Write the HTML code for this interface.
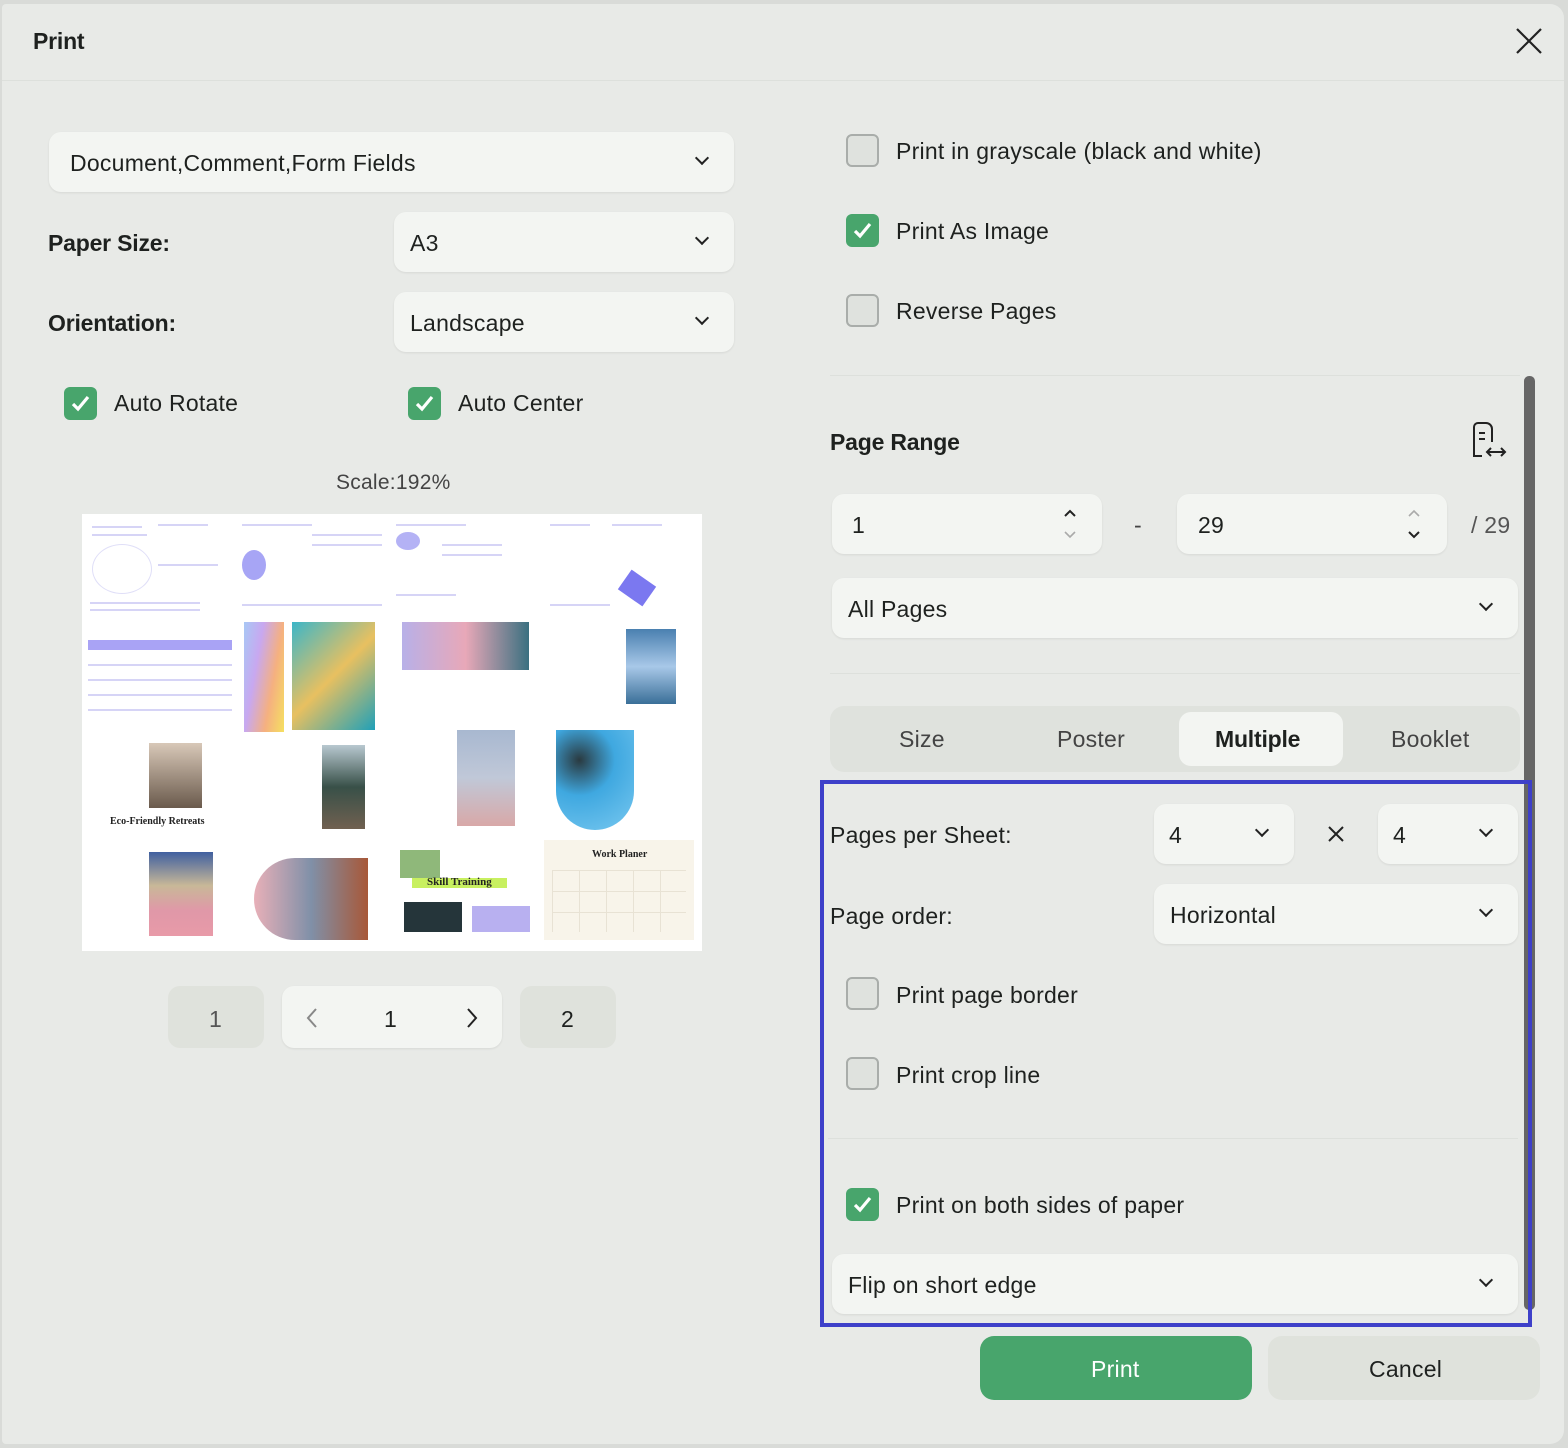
<!DOCTYPE html>
<html><head><meta charset="utf-8">
<style>
*{box-sizing:border-box;margin:0;padding:0}
body{width:1568px;height:1448px;background:#d9dbd8;font-family:"Liberation Sans",sans-serif;color:#1e211f;position:relative;overflow:hidden}
.dlg{position:absolute;left:2px;top:4px;width:1562px;height:1440px;background:#e8eae7;border-radius:4px 14px 14px 4px}
.a{position:absolute}
.t{position:absolute;font-size:23px;letter-spacing:0.25px;white-space:nowrap;line-height:1}
.b{font-weight:bold;letter-spacing:-0.2px}
.box{position:absolute;background:#f3f5f2;border-radius:12px;box-shadow:0 1px 2px rgba(0,0,0,.08)}
.chev{position:absolute;width:10px;height:10px;border-right:2px solid #222;border-bottom:2px solid #222;transform:rotate(45deg)}
.cb{position:absolute;width:33px;height:33px;border-radius:6px;background:#dfe2de;border:2px solid #a9adaa}
.cb.on{background:#48a56c;border:none}
.cb.on svg{position:absolute;left:6px;top:6px}
.hr{position:absolute;height:1px;background:#dde0dc}
.pt{position:absolute;font-family:"Liberation Serif",serif;font-weight:bold;white-space:nowrap;line-height:1;color:#222}
.ln{position:absolute;height:2px;background:#d6d4f6}
</style></head><body>
<div class="dlg"></div>
<div class="t b" style="left:33px;top:30px;font-size:23px">Print</div>
<svg class="a" style="left:1515px;top:27px" width="28" height="28" viewBox="0 0 28 28"><path d="M2 2L26 26M26 2L2 26" stroke="#222" stroke-width="2.2"/></svg>
<div class="hr" style="left:2px;top:80px;width:1562px"></div>

<!-- left -->
<div class="box" style="left:49px;top:132px;width:685px;height:60px"></div>
<div class="t" style="left:70px;top:152px">Document,Comment,Form Fields</div>
<div class="chev" style="left:697px;top:153px"></div>

<div class="t b" style="left:48px;top:232px">Paper Size:</div>
<div class="box" style="left:394px;top:212px;width:340px;height:60px"></div>
<div class="t" style="left:410px;top:232px">A3</div>
<div class="chev" style="left:697px;top:233px"></div>

<div class="t b" style="left:48px;top:312px">Orientation:</div>
<div class="box" style="left:394px;top:292px;width:340px;height:60px"></div>
<div class="t" style="left:410px;top:312px">Landscape</div>
<div class="chev" style="left:697px;top:313px"></div>

<div class="cb on" style="left:64px;top:387px"><svg width="21" height="21" viewBox="0 0 21 21"><path d="M3 11l5 5 10-12" stroke="#fff" stroke-width="3.2" fill="none"/></svg></div>
<div class="t" style="left:114px;top:392px">Auto Rotate</div>
<div class="cb on" style="left:408px;top:387px"><svg width="21" height="21" viewBox="0 0 21 21"><path d="M3 11l5 5 10-12" stroke="#fff" stroke-width="3.2" fill="none"/></svg></div>
<div class="t" style="left:458px;top:392px">Auto Center</div>

<div class="t" style="left:336px;top:472px;font-size:21px;color:#444">Scale:192%</div>

<!-- preview -->
<div class="a" style="left:82px;top:514px;width:620px;height:437px;background:#fff">
 <div class="ln" style="left:10px;top:12px;width:50px"></div><div class="ln" style="left:10px;top:20px;width:55px"></div>
 <div class="a" style="left:10px;top:30px;width:60px;height:50px;border-radius:50%;border:1px solid #e0dff8"></div>
 <div class="ln" style="left:76px;top:10px;width:50px"></div><div class="ln" style="left:76px;top:50px;width:60px"></div>
 <div class="ln" style="left:8px;top:88px;width:110px"></div><div class="ln" style="left:8px;top:95px;width:110px"></div>
 <div class="ln" style="left:160px;top:10px;width:70px"></div><div class="ln" style="left:230px;top:20px;width:70px"></div><div class="ln" style="left:230px;top:30px;width:70px"></div><div class="ln" style="left:160px;top:90px;width:140px"></div>
 <div class="ln" style="left:314px;top:10px;width:70px"></div><div class="ln" style="left:360px;top:30px;width:60px"></div><div class="ln" style="left:360px;top:40px;width:60px"></div><div class="ln" style="left:314px;top:80px;width:60px"></div>
 <div class="ln" style="left:468px;top:10px;width:40px"></div><div class="ln" style="left:530px;top:10px;width:50px"></div><div class="ln" style="left:468px;top:90px;width:60px"></div>
 <div class="a" style="left:314px;top:18px;width:24px;height:18px;border-radius:50%;background:#b4b2f5"></div>
 <div class="a" style="left:540px;top:62px;width:30px;height:24px;background:#7b78f0;transform:rotate(35deg)"></div>
 <div class="a" style="left:160px;top:36px;width:24px;height:30px;border-radius:50%;background:#a7a5f5"></div>
 <div class="a" style="left:6px;top:126px;width:144px;height:10px;background:#a9a3f5"></div>
 <div class="ln" style="left:6px;top:150px;width:144px"></div><div class="ln" style="left:6px;top:165px;width:144px"></div><div class="ln" style="left:6px;top:180px;width:144px"></div><div class="ln" style="left:6px;top:195px;width:144px"></div>
 <div class="a" style="left:162px;top:108px;width:40px;height:110px;background:linear-gradient(100deg,#a8c8f5,#c8a8f0,#f5b080,#f5e060)"></div>
 <div class="a" style="left:210px;top:108px;width:83px;height:108px;background:linear-gradient(135deg,#3cb6c8,#e8c060,#20a0b8)"></div>
 <div class="a" style="left:320px;top:108px;width:127px;height:48px;background:linear-gradient(90deg,#b8b0e8,#e8a8b8,#3a7080)"></div>
 <div class="a" style="left:544px;top:115px;width:50px;height:75px;background:linear-gradient(#4a80b0,#a8c8e8,#3a6f98)"></div>
 <div class="a" style="left:67px;top:229px;width:53px;height:65px;background:linear-gradient(#d8c8b8,#6a5a4c)"></div>
 <div class="pt" style="left:28px;top:303px;font-size:10px">Eco-Friendly Retreats</div>
 <div class="a" style="left:240px;top:231px;width:43px;height:84px;background:linear-gradient(#b8c8d0,#385048,#706050)"></div>
 <div class="a" style="left:375px;top:216px;width:58px;height:96px;background:linear-gradient(#a8b8d0,#c0c8d8,#d8a8a8)"></div>
 <div class="a" style="left:474px;top:216px;width:78px;height:100px;border-radius:0 0 40px 40px;background:radial-gradient(circle at 30% 30%,#2a3a40,#3fa8e0 40%,#78c8f0)"></div>
 <div class="a" style="left:67px;top:338px;width:64px;height:84px;background:linear-gradient(#4060a0,#c8b898 40%,#e098a8 70%,#e89aa8)"></div>
 <div class="a" style="left:172px;top:344px;width:114px;height:82px;border-radius:45px 0 0 45px;background:linear-gradient(90deg,#e8b0b8,#8090a8,#a85838)"></div>
 <div class="a" style="left:318px;top:336px;width:40px;height:28px;background:#8fb87a"></div>
 <div class="a" style="left:330px;top:364px;width:95px;height:10px;background:#c8f060"></div>
 <div class="pt" style="left:345px;top:363px;font-size:11px">Skill Training</div>
 <div class="a" style="left:322px;top:388px;width:58px;height:30px;background:#25353a"></div>
 <div class="a" style="left:390px;top:392px;width:58px;height:26px;background:#b8b0f0"></div>
 <div class="a" style="left:462px;top:326px;width:150px;height:100px;background:#f8f4ea"></div>
 <div class="pt" style="left:510px;top:336px;font-size:10px">Work Planer</div>
 <div class="a" style="left:470px;top:356px;width:134px;height:62px;background:repeating-linear-gradient(90deg,#e8e2d4 0 1px,transparent 1px 27px),repeating-linear-gradient(#e8e2d4 0 1px,transparent 1px 21px)"></div>
</div>

<!-- pager -->
<div class="a" style="left:168px;top:986px;width:96px;height:62px;background:#dfe2dc;border-radius:12px"></div>
<div class="t" style="left:209px;top:1008px;color:#555">1</div>
<div class="box" style="left:282px;top:986px;width:220px;height:62px"></div>
<svg class="a" style="left:304px;top:1007px" width="16" height="22"><path d="M12 2L4 11l8 9" stroke="#888" stroke-width="2" fill="none"/></svg>
<div class="t" style="left:384px;top:1008px">1</div>
<svg class="a" style="left:464px;top:1007px" width="16" height="22"><path d="M4 2l8 9-8 9" stroke="#222" stroke-width="2" fill="none"/></svg>
<div class="a" style="left:520px;top:986px;width:96px;height:62px;background:#dfe2dc;border-radius:12px"></div>
<div class="t" style="left:561px;top:1008px">2</div>

<!-- right -->
<div class="cb" style="left:846px;top:134px"></div>
<div class="t" style="left:896px;top:140px">Print in grayscale (black and white)</div>
<div class="cb on" style="left:846px;top:214px"><svg width="21" height="21" viewBox="0 0 21 21"><path d="M3 11l5 5 10-12" stroke="#fff" stroke-width="3.2" fill="none"/></svg></div>
<div class="t" style="left:896px;top:220px">Print As Image</div>
<div class="cb" style="left:846px;top:294px"></div>
<div class="t" style="left:896px;top:300px">Reverse Pages</div>

<div class="hr" style="left:830px;top:375px;width:690px"></div>
<div class="a" style="left:1524px;top:376px;width:11px;height:934px;background:#666;border-radius:5px"></div>

<div class="t b" style="left:830px;top:431px">Page Range</div>
<svg class="a" style="left:1470px;top:420px" width="40" height="40" viewBox="0 0 40 40" fill="none" stroke="#222" stroke-width="2"><path d="M12 36H4V7a4 4 0 0 1 4-4h8a6 6 0 0 1 6 6v13"/><path d="M9 13h6M9 19h6"/><path d="M17 32h18M21 28l-4 4 4 4M31 28l4 4-4 4"/></svg>

<div class="box" style="left:832px;top:494px;width:270px;height:60px"></div>
<div class="t" style="left:852px;top:514px">1</div>
<svg class="a" style="left:1062px;top:506px" width="16" height="36"><path d="M3 10l5-5 5 5" stroke="#222" stroke-width="2" fill="none"/><path d="M3 26l5 5 5-5" stroke="#aaa" stroke-width="1.6" fill="none"/></svg>
<div class="t" style="left:1134px;top:514px;color:#444">-</div>
<div class="box" style="left:1177px;top:494px;width:270px;height:60px"></div>
<div class="t" style="left:1198px;top:514px">29</div>
<svg class="a" style="left:1406px;top:506px" width="16" height="36"><path d="M3 10l5-5 5 5" stroke="#aaa" stroke-width="1.6" fill="none"/><path d="M3 26l5 5 5-5" stroke="#222" stroke-width="2" fill="none"/></svg>
<div class="t" style="left:1471px;top:514px;color:#555">/ 29</div>

<div class="box" style="left:832px;top:578px;width:686px;height:60px"></div>
<div class="t" style="left:848px;top:598px">All Pages</div>
<div class="chev" style="left:1481px;top:599px"></div>

<div class="hr" style="left:830px;top:673px;width:690px"></div>

<div class="a" style="left:830px;top:706px;width:690px;height:66px;background:#dfe2dd;border-radius:14px"></div>
<div class="a" style="left:1179px;top:712px;width:164px;height:54px;background:#f3f5f2;border-radius:12px"></div>
<div class="t" style="left:899px;top:728px;color:#444">Size</div>
<div class="t" style="left:1057px;top:728px;color:#444">Poster</div>
<div class="t b" style="left:1215px;top:728px">Multiple</div>
<div class="t" style="left:1391px;top:728px;color:#444">Booklet</div>

<div class="a" style="left:820px;top:780px;width:712px;height:547px;border:4px solid #3e40c9"></div>

<div class="t" style="left:830px;top:824px">Pages per Sheet:</div>
<div class="box" style="left:1154px;top:804px;width:140px;height:60px"></div>
<div class="t" style="left:1169px;top:824px">4</div>
<div class="chev" style="left:1257px;top:825px"></div>
<svg class="a" style="left:1328px;top:826px" width="16" height="16"><path d="M1 1l14 14M15 1L1 15" stroke="#222" stroke-width="2"/></svg>
<div class="box" style="left:1378px;top:804px;width:140px;height:60px"></div>
<div class="t" style="left:1393px;top:824px">4</div>
<div class="chev" style="left:1481px;top:825px"></div>

<div class="t" style="left:830px;top:905px">Page order:</div>
<div class="box" style="left:1154px;top:884px;width:364px;height:60px"></div>
<div class="t" style="left:1170px;top:904px">Horizontal</div>
<div class="chev" style="left:1481px;top:905px"></div>

<div class="cb" style="left:846px;top:977px"></div>
<div class="t" style="left:896px;top:984px">Print page border</div>
<div class="cb" style="left:846px;top:1057px"></div>
<div class="t" style="left:896px;top:1064px">Print crop line</div>

<div class="hr" style="left:828px;top:1138px;width:690px"></div>

<div class="cb on" style="left:846px;top:1188px"><svg width="21" height="21" viewBox="0 0 21 21"><path d="M3 11l5 5 10-12" stroke="#fff" stroke-width="3.2" fill="none"/></svg></div>
<div class="t" style="left:896px;top:1194px">Print on both sides of paper</div>

<div class="box" style="left:832px;top:1254px;width:686px;height:60px"></div>
<div class="t" style="left:848px;top:1274px">Flip on short edge</div>
<div class="chev" style="left:1481px;top:1275px"></div>

<div class="a" style="left:980px;top:1336px;width:272px;height:64px;background:#48a56c;border-radius:14px"></div>
<div class="t" style="left:1091px;top:1358px;color:#fff">Print</div>
<div class="a" style="left:1268px;top:1336px;width:272px;height:64px;background:#dfe2dc;border-radius:14px"></div>
<div class="t" style="left:1369px;top:1358px">Cancel</div>
</body></html>
